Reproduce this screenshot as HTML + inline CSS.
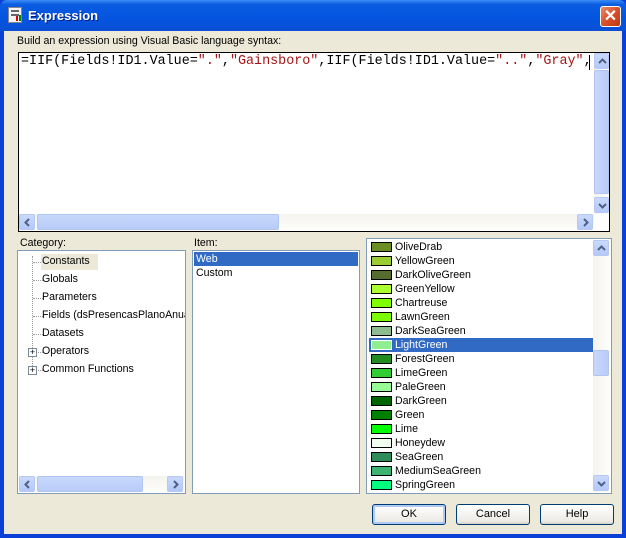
<!DOCTYPE html>
<html><head><meta charset="utf-8"><style>
*{box-sizing:border-box;margin:0;padding:0}
body{width:626px;height:538px;overflow:hidden;background:#0a3fd8;font-family:"Liberation Sans",sans-serif;font-size:10.6px;position:relative}
.a{position:absolute}
.title{left:0;top:0;width:626px;height:31px;background:linear-gradient(#3a8cf8 0%,#0a5ce0 15%,#0454e0 60%,#0a4fd4 100%);border-radius:7px 7px 0 0}
.body{left:4px;top:31px;width:618px;height:503px;background:#ece9d8}
.box{background:#fff;border:1px solid #7f9db9}
.sbv{background:linear-gradient(90deg,#f4f3ee,#fdfdfa)}
.btnA{background:linear-gradient(#cad9fc,#b4c9f9);border:1px solid #b6c8f4;border-radius:2px}
.btnA svg{position:absolute;left:3px;top:3px}
.thumb{background:linear-gradient(90deg,#c8d8fc,#b8ccf8);border:1px solid #b0c4f0;border-radius:2px}
.thumbh{background:linear-gradient(#c8d8fc,#b8ccf8);border:1px solid #b0c4f0;border-radius:2px}
.btn{background:linear-gradient(#fff,#ecebe6 85%,#d6d0c5);border:1px solid #003c74;border-radius:3px;text-align:center;line-height:19px;font-size:11px}
.ci{position:absolute;left:2px;height:14px;width:224px;line-height:14px}
.sw{position:absolute;left:2px;top:2px;width:21px;height:10px;border:1px solid #000}
.ci span{position:absolute;left:26px}
.tree{position:absolute;left:24px}
.dot{position:absolute;border-top:1px dotted #999;width:10px}
</style></head><body>
<div class="a title"></div>
<div class="a" style="left:8px;top:7px;width:14px;height:16px;background:#f4f4f4;border:1px solid #888"></div>
<div class="a" style="left:11px;top:10px;width:8px;height:2px;background:#666"></div>
<div class="a" style="left:11px;top:14px;width:8px;height:2px;background:#666"></div>
<div class="a" style="left:16px;top:16px;width:2px;height:5px;background:#d00"></div>
<div class="a" style="left:19px;top:15px;width:2px;height:6px;background:#080"></div>
<div class="a" style="left:28px;top:8px;color:#fff;font-weight:bold;font-size:13px;text-shadow:1px 1px #0a1e7a">Expression</div>
<div class="a" style="left:600px;top:6px;width:21px;height:21px;background:linear-gradient(135deg,#e88a6a,#d8502c 50%,#c03810);border:1px solid #fff;border-radius:3px;color:#fff;font-weight:bold;font-size:16px;text-align:center;line-height:19px">✕</div>
<div class="a body"></div>
<div class="a" style="left:17px;top:35px">Build an expression using Visual Basic language syntax:</div>
<div class="a" style="left:18px;top:52px;width:592px;height:180px;background:#fff;border:1px solid #000"></div>
<div class="a" style="left:21px;top:54px;font-family:'Liberation Mono',monospace;font-size:13.4px;white-space:nowrap;overflow:hidden;width:569px">=IIF(Fields!ID1.Value=<span style="color:#a31515">"."</span>,<span style="color:#a31515">"Gainsboro"</span>,IIF(Fields!ID1.Value=<span style="color:#a31515">".."</span>,<span style="color:#a31515">"Gray"</span>,IIF</div>
<div class="a" style="left:589px;top:55px;width:1px;height:15px;background:#000"></div>
<div class="a sbv" style="left:594px;top:53px;width:15px;height:161px"></div>
<div class="a btnA" style="left:594px;top:53px;width:15px;height:16px"><svg width="9" height="9"><path d="M1 6 L4.5 2.5 L8 6" stroke="#4d6185" stroke-width="2" fill="none"/></svg></div>
<div class="a thumb" style="left:594px;top:70px;width:15px;height:124px"></div>
<div class="a btnA" style="left:594px;top:197px;width:15px;height:16px"><svg width="9" height="9"><path d="M1 3 L4.5 6.5 L8 3" stroke="#4d6185" stroke-width="2" fill="none"/></svg></div>
<div class="a" style="left:19px;top:214px;width:575px;height:16px;background:linear-gradient(#f4f3ee,#fdfdfa)"></div>
<div class="a btnA" style="left:19px;top:214px;width:16px;height:16px"><svg width="9" height="9"><path d="M6 1 L2.5 4.5 L6 8" stroke="#4d6185" stroke-width="2" fill="none"/></svg></div>
<div class="a thumbh" style="left:37px;top:214px;width:242px;height:16px"></div>
<div class="a btnA" style="left:577px;top:214px;width:16px;height:16px"><svg width="9" height="9"><path d="M3 1 L6.5 4.5 L3 8" stroke="#4d6185" stroke-width="2" fill="none"/></svg></div>

<div class="a" style="left:20px;top:237px">Category:</div>
<div class="a box" style="left:17px;top:250px;width:169px;height:244px;overflow:hidden">
 <div class="a" style="left:14px;top:5px;border-left:1px dotted #999;height:114px"></div>
 <div class="dot" style="left:15px;top:11px"></div><div class="a" style="left:23px;top:3px;width:57px;height:16px;background:#ece9d8"></div><div class="tree" style="top:4px">Constants</div>
 <div class="dot" style="left:15px;top:29px"></div><div class="tree" style="top:22px">Globals</div>
 <div class="dot" style="left:15px;top:47px"></div><div class="tree" style="top:40px">Parameters</div>
 <div class="dot" style="left:15px;top:65px"></div><div class="tree" style="top:58px;white-space:nowrap">Fields (dsPresencasPlanoAnual</div>
 <div class="dot" style="left:15px;top:83px"></div><div class="tree" style="top:76px">Datasets</div>
 <div class="dot" style="left:15px;top:101px"></div><div class="a" style="left:10px;top:97px;width:9px;height:9px;background:#fff;border:1px solid #7a8a99;font-size:9px;line-height:7px;text-align:center">+</div><div class="tree" style="top:94px">Operators</div>
 <div class="dot" style="left:15px;top:119px"></div><div class="a" style="left:10px;top:115px;width:9px;height:9px;background:#fff;border:1px solid #7a8a99;font-size:9px;line-height:7px;text-align:center">+</div><div class="tree" style="top:112px">Common Functions</div>
 <div class="a" style="left:1px;top:225px;width:165px;height:16px;background:linear-gradient(#f4f3ee,#fdfdfa)"></div>
 <div class="a btnA" style="left:1px;top:225px;width:16px;height:16px"><svg width="9" height="9"><path d="M6 1 L2.5 4.5 L6 8" stroke="#4d6185" stroke-width="2" fill="none"/></svg></div>
 <div class="a thumbh" style="left:19px;top:225px;width:106px;height:16px"></div>
 <div class="a btnA" style="left:149px;top:225px;width:16px;height:16px"><svg width="9" height="9"><path d="M3 1 L6.5 4.5 L3 8" stroke="#4d6185" stroke-width="2" fill="none"/></svg></div>
</div>

<div class="a" style="left:194px;top:237px">Item:</div>
<div class="a box" style="left:192px;top:250px;width:168px;height:244px">
 <div class="a" style="left:1px;top:1px;width:164px;height:14px;background:#316ac5;color:#fff;padding-left:2px;line-height:14px">Web</div>
 <div class="a" style="left:3px;top:15px;line-height:14px">Custom</div>
</div>

<div class="a box" style="left:366px;top:238px;width:246px;height:256px;overflow:hidden">
 <div class="ci" style="top:1px"><div class="sw" style="background:#6B8E23"></div><span>OliveDrab</span></div>
 <div class="ci" style="top:15px"><div class="sw" style="background:#9ACD32"></div><span>YellowGreen</span></div>
 <div class="ci" style="top:29px"><div class="sw" style="background:#556B2F"></div><span>DarkOliveGreen</span></div>
 <div class="ci" style="top:43px"><div class="sw" style="background:#ADFF2F"></div><span>GreenYellow</span></div>
 <div class="ci" style="top:57px"><div class="sw" style="background:#7FFF00"></div><span>Chartreuse</span></div>
 <div class="ci" style="top:71px"><div class="sw" style="background:#7CFC00"></div><span>LawnGreen</span></div>
 <div class="ci" style="top:85px"><div class="sw" style="background:#8FBC8F"></div><span>DarkSeaGreen</span></div>
 <div class="ci" style="top:99px;background:#316ac5;color:#fff"><div class="sw" style="background:#90EE90;border-color:#fff"></div><span>LightGreen</span></div>
 <div class="ci" style="top:113px"><div class="sw" style="background:#228B22"></div><span>ForestGreen</span></div>
 <div class="ci" style="top:127px"><div class="sw" style="background:#32CD32"></div><span>LimeGreen</span></div>
 <div class="ci" style="top:141px"><div class="sw" style="background:#98FB98"></div><span>PaleGreen</span></div>
 <div class="ci" style="top:155px"><div class="sw" style="background:#006400"></div><span>DarkGreen</span></div>
 <div class="ci" style="top:169px"><div class="sw" style="background:#008000"></div><span>Green</span></div>
 <div class="ci" style="top:183px"><div class="sw" style="background:#00FF00"></div><span>Lime</span></div>
 <div class="ci" style="top:197px"><div class="sw" style="background:#F0FFF0"></div><span>Honeydew</span></div>
 <div class="ci" style="top:211px"><div class="sw" style="background:#2E8B57"></div><span>SeaGreen</span></div>
 <div class="ci" style="top:225px"><div class="sw" style="background:#3CB371"></div><span>MediumSeaGreen</span></div>
 <div class="ci" style="top:239px"><div class="sw" style="background:#00FF7F"></div><span>SpringGreen</span></div>
 <div class="a sbv" style="left:226px;top:1px;width:16px;height:252px"></div>
 <div class="a btnA" style="left:226px;top:1px;width:16px;height:16px"><svg width="9" height="9"><path d="M1 6 L4.5 2.5 L8 6" stroke="#4d6185" stroke-width="2" fill="none"/></svg></div>
 <div class="a thumb" style="left:226px;top:111px;width:16px;height:26px"></div>
 <div class="a btnA" style="left:226px;top:236px;width:16px;height:16px"><svg width="9" height="9"><path d="M1 3 L4.5 6.5 L8 3" stroke="#4d6185" stroke-width="2" fill="none"/></svg></div>
</div>

<div class="a btn" style="left:372px;top:504px;width:74px;height:21px;box-shadow:inset 0 0 0 2px #b0c8f4">OK</div>
<div class="a btn" style="left:456px;top:504px;width:74px;height:21px">Cancel</div>
<div class="a btn" style="left:540px;top:504px;width:74px;height:21px">Help</div>
</body></html>
